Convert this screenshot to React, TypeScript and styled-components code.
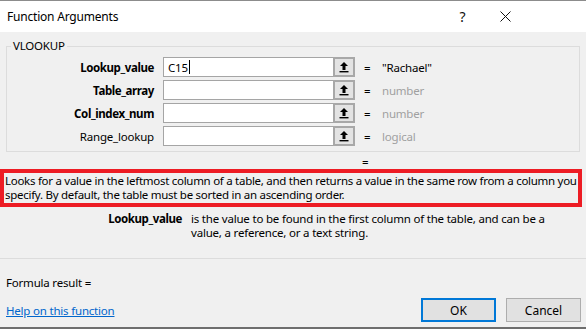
import styled, { createGlobalStyle } from "styled-components";

const GlobalStyle = createGlobalStyle`
  html, body {
    margin: 0;
    padding: 0;
    background: #f0f0f0;
  }
  * {
    box-sizing: border-box;
  }
`;

const Dialog = styled.div`
  width: 586px;
  height: 329px;
  background: #f0f0f0;
  border-top: 1px solid #8c8c8c;
  border-bottom: 2px solid #6e6e6e;
  font-family: "Noto Sans", "Open Sans", sans-serif;
  font-size: 11.5px;
  letter-spacing: -0.2px;
  color: #000;
  display: flex;
  flex-direction: column;
  overflow: hidden;
`;

const TitleBar = styled.div`
  height: 31px;
  background: #fff;
  display: flex;
  align-items: center;
  padding-left: 7px;
  padding-right: 59px;
`;

const Title = styled.div`
  flex: 1;
  font-size: 12px;
`;

const TitleButton = styled.div`
  width: 43px;
  height: 31px;
  display: flex;
  align-items: center;
  justify-content: center;
  font-size: 14px;
  color: #111;
`;

const Group = styled.fieldset`
  margin: 7px 6px 0 6px;
  padding: 4px 0 3px 0;
  border: 1px solid #dcdcdc;
  height: 113px;
`;

const Legend = styled.legend`
  margin-left: 4px;
  padding: 0 2px;
  line-height: 14px;
`;

const ArgRows = styled.div`
  display: grid;
  grid-template-columns: 147px 192px 1fr;
  column-gap: 9px;
  row-gap: 3px;
  align-items: center;
`;

const ArgLabel = styled.div<{ $bold?: boolean }>`
  text-align: right;
  font-weight: ${(p) => (p.$bold ? 700 : 400)};
  letter-spacing: ${(p) => (p.$bold ? "-0.4px" : "-0.2px")};
`;

const InputWrap = styled.div`
  display: flex;
  height: 20px;
`;

const TextBox = styled.div`
  flex: 1;
  background: #fff;
  border: 1px solid #a5a5a5;
  border-right: none;
  padding-left: 4px;
  display: flex;
  align-items: center;
`;

const Caret = styled.span`
  display: inline-block;
  width: 1px;
  height: 14px;
  background: #000;
  margin-left: 1px;
`;

const RefButton = styled.div`
  width: 22px;
  height: 20px;
  border: 2px solid #a8a8a8;
  background: #e3e3e3;
  display: flex;
  align-items: center;
  justify-content: center;
`;

const Result = styled.div<{ $muted?: boolean }>`
  display: flex;
  gap: 11px;
  color: ${(p) => (p.$muted ? "#a0a0a0" : "#000")};
`;

const Eq = styled.span`
  color: #000;
  width: 7px;
`;

const FinalEq = styled.div`
  padding-left: 362px;
  height: 15px;
  margin-top: 2px;
  line-height: 15px;
`;

const Highlight = styled.div`
  width: 582px;
  height: 38px;
  border: 4px solid #ed1c24;
  padding: 0 0 0 1px;
  line-height: 14px;
  letter-spacing: -0.28px;
  display: flex;
  flex-direction: column;
  justify-content: center;
  white-space: nowrap;
`;

const ArgHelp = styled.div`
  display: grid;
  grid-template-columns: 182px 1fr;
  column-gap: 9px;
  margin-top: 5px;
  line-height: 14px;
`;

const ArgHelpName = styled.div`
  text-align: right;
  font-weight: 700;
  letter-spacing: -0.4px;
`;

const ArgHelpText = styled.div`
  white-space: nowrap;
`;

const Footer = styled.div`
  margin-top: auto;
  border-top: 1px solid #dcdcdc;
  padding: 16px 5px 5px 6px;
  display: flex;
  flex-direction: column;
`;

const FormulaResult = styled.div`
  line-height: 16px;
`;

const FooterRow = styled.div`
  display: flex;
  align-items: center;
  margin-top: 7px;
`;

const HelpLink = styled.a`
  flex: 1;
  color: #0066cc;
  text-decoration: underline;
  cursor: pointer;
`;

const Button = styled.button<{ $primary?: boolean }>`
  width: 75px;
  height: 24px;
  margin-left: 10px;
  font-family: inherit;
  font-size: 12px;
  color: #000;
  background: #e1e1e1;
  border: ${(p) => (p.$primary ? "2px solid #0078d7" : "1px solid #adadad")};
  padding: 0;
`;

const RefIcon = () => (
  <svg width="10" height="12" viewBox="0 0 10 12">
    <path d="M5 1 L1 5 H3.5 V9 H6.5 V5 H9 Z" fill="#000" />
    <rect x="0.5" y="10" width="9" height="1.4" fill="#000" />
  </svg>
);

const CloseIcon = () => (
  <svg width="11" height="11" viewBox="0 0 11 11">
    <path d="M0.5 0.5 L10.5 10.5 M10.5 0.5 L0.5 10.5" stroke="#111" strokeWidth="1" />
  </svg>
);

const args = [
  { name: "Lookup_value", bold: true, value: "C15", result: '"Rachael"', muted: false },
  { name: "Table_array", bold: true, value: "", result: "number", muted: true },
  { name: "Col_index_num", bold: true, value: "", result: "number", muted: true },
  { name: "Range_lookup", bold: false, value: "", result: "logical", muted: true },
];

export default function App() {
  return (
    <>
      <GlobalStyle />
      <Dialog>
        <TitleBar>
          <Title>Function Arguments</Title>
          <TitleButton>?</TitleButton>
          <TitleButton>
            <CloseIcon />
          </TitleButton>
        </TitleBar>

        <Group>
          <Legend>VLOOKUP</Legend>
          <ArgRows>
            {args.map((a, i) => [
              <ArgLabel key={a.name} $bold={a.bold}>
                {a.name}
              </ArgLabel>,
              <InputWrap key={a.name + "-in"}>
                <TextBox>
                  {a.value}
                  {i === 0 && <Caret />}
                </TextBox>
                <RefButton>
                  <RefIcon />
                </RefButton>
              </InputWrap>,
              <Result key={a.name + "-res"} $muted={a.muted}>
                <Eq>=</Eq>
                <span>{a.result}</span>
              </Result>,
            ])}
          </ArgRows>
        </Group>

        <FinalEq>=</FinalEq>

        <Highlight>
          <div>
            Looks for a value in the leftmost column of a table, and then returns a value in the same row from a column you
          </div>
          <div>specify. By default, the table must be sorted in an ascending order.</div>
        </Highlight>

        <ArgHelp>
          <ArgHelpName>Lookup_value</ArgHelpName>
          <ArgHelpText>
            is the value to be found in the first column of the table, and can be a
            <br />
            value, a reference, or a text string.
          </ArgHelpText>
        </ArgHelp>

        <Footer>
          <FormulaResult>Formula result =</FormulaResult>
          <FooterRow>
            <HelpLink>Help on this function</HelpLink>
            <Button $primary>OK</Button>
            <Button>Cancel</Button>
          </FooterRow>
        </Footer>
      </Dialog>
    </>
  );
}
